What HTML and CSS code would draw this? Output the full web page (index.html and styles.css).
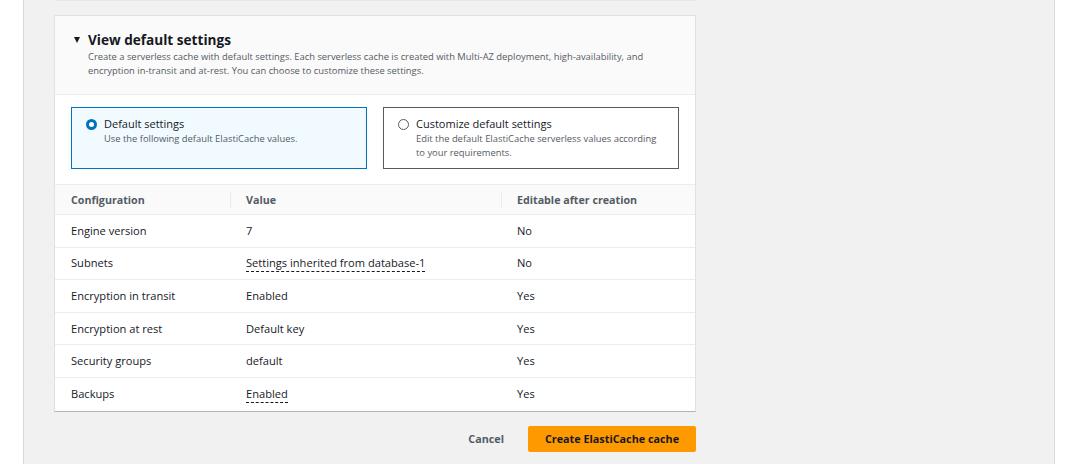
FILE: index.html
```html
<!DOCTYPE html>
<html>
<head>
<meta charset="utf-8">
<link rel="stylesheet" href="styles.css">
</head>
<body>
<div class="page">
  <div class="prev-edge"></div>
  <section class="card">
    <header class="card-head">
      <h2 class="title"><span class="caret"></span>View default settings</h2>
      <p class="desc">Create a serverless cache with default settings. Each serverless cache is created with Multi-AZ deployment, high-availability, and encryption in-transit and at-rest. You can choose to customize these settings.</p>
    </header>
    <div class="tiles">
      <div class="tile selected">
        <span class="radio on"></span>
        <div class="tile-text">
          <div class="tile-label">Default settings</div>
          <div class="tile-desc">Use the following default ElastiCache values.</div>
        </div>
      </div>
      <div class="tile">
        <span class="radio"></span>
        <div class="tile-text">
          <div class="tile-label">Customize default settings</div>
          <div class="tile-desc">Edit the default ElastiCache serverless values according to your requirements.</div>
        </div>
      </div>
    </div>
    <div class="table">
      <div class="row head">
        <div class="cell">Configuration</div>
        <div class="cell sep">Value</div>
        <div class="cell sep">Editable after creation</div>
      </div>
      <div class="row">
        <div class="cell">Engine version</div>
        <div class="cell">7</div>
        <div class="cell">No</div>
      </div>
      <div class="row">
        <div class="cell">Subnets</div>
        <div class="cell"><span class="dashed">Settings inherited from database-1</span></div>
        <div class="cell">No</div>
      </div>
      <div class="row">
        <div class="cell">Encryption in transit</div>
        <div class="cell">Enabled</div>
        <div class="cell">Yes</div>
      </div>
      <div class="row">
        <div class="cell">Encryption at rest</div>
        <div class="cell">Default key</div>
        <div class="cell">Yes</div>
      </div>
      <div class="row">
        <div class="cell">Security groups</div>
        <div class="cell">default</div>
        <div class="cell">Yes</div>
      </div>
      <div class="row last">
        <div class="cell">Backups</div>
        <div class="cell"><span class="dashed">Enabled</span></div>
        <div class="cell">Yes</div>
      </div>
    </div>
  </section>
  <div class="actions">
    <button class="btn link">Cancel</button>
    <button class="btn primary">Create ElastiCache cache</button>
  </div>
</div>
</body>
</html>
```
FILE: styles.css
```css
* { box-sizing: border-box; }
html, body { margin: 0; padding: 0; background: #ffffff; }
body {
  font-family: "Open Sans", "Noto Sans", sans-serif;
  color: #16191f;
}
.page {
  margin-left: 23px;
  width: 1032px;
  height: 464px;
  background: #f0f1f0;
  border-left: 1px solid #d5dbdb;
  border-right: 1px solid #d5dbdb;
  padding-left: 30px;
  overflow: hidden;
}
.prev-edge {
  width: 642px;
  height: 1px;
  background: #e6e8e8;
  margin-left: 1px;
}
.card {
  margin-top: 14px;
  width: 642px;
  background: #ffffff;
  border: 1px solid #dfe2e2;
  border-bottom-color: #aab7b8;
}
.card-head {
  background: #fafafa;
  border-bottom: 1px solid #eaeded;
  padding: 15px 20px 15px 18px;
  height: 79px;
}
.title {
  margin: 0;
  font-size: 13.6px;
  font-weight: 700;
  line-height: 18px;
  display: flex;
  align-items: center;
}
.caret {
  width: 0; height: 0;
  border-left: 3.5px solid transparent;
  border-right: 3.5px solid transparent;
  border-top: 6px solid #16191f;
  margin-right: 8px;
  margin-left: 1px;
}
.desc {
  margin: 1px 0 0 15px;
  max-width: 575px;
  font-size: 9.4px;
  line-height: 14px;
  color: #545b64;
}
.tiles {
  display: flex;
  gap: 16px;
  padding: 12px 16px 15px 16px;
}
.tile {
  width: 296px;
  height: 62px;
  border: 1px solid #545b64;
  display: flex;
  align-items: flex-start;
  padding: 8px 14px;
  background: #fff;
}
.tile.selected {
  border-color: #0073bb;
  background: #f1faff;
}
.radio {
  flex: none;
  width: 11px;
  height: 11px;
  border-radius: 50%;
  border: 1px solid #545b64;
  background: #fff;
  margin-top: 3px;
  margin-right: 7px;
}
.radio.on {
  border: 3.5px solid #0073bb;
}
.tile-label {
  font-size: 11px;
  line-height: 16px;
}
.tile-desc {
  font-size: 9.4px;
  line-height: 14px;
  color: #545b64;
}
.table {
  display: flex;
  flex-direction: column;
}
.row {
  display: grid;
  grid-template-columns: 175px 271px 1fr;
  height: 32.6px;
  border-bottom: 1px solid #eaeded;
  align-items: center;
  font-size: 11.1px;
}
.row.last { border-bottom: none; }
.row.head {
  height: 31px;
  background: #fafafa;
  border-top: 1px solid #eaeded;
  font-weight: 700;
  font-size: 10.7px;
  color: #545b64;
}
.cell {
  padding-left: 16px;
  line-height: 16px;
}
.head .cell.sep {
  border-left: 1px solid #eaeded;
  padding-left: 15px;
}
.dashed {
  border-bottom: 1px dashed #16191f;
  padding-bottom: 1px;
}
.actions {
  width: 642px;
  display: flex;
  justify-content: flex-end;
  align-items: center;
  gap: 24px;
  margin-top: 14px;
}
.btn {
  font-family: inherit;
  font-size: 10.8px;
  font-weight: 700;
  border: none;
  cursor: pointer;
}
.btn.link {
  background: transparent;
  color: #545b64;
  padding: 0;
}
.btn.primary {
  background: #ff9900;
  color: #16191f;
  width: 168px;
  height: 26px;
  border-radius: 2px;
}
```
